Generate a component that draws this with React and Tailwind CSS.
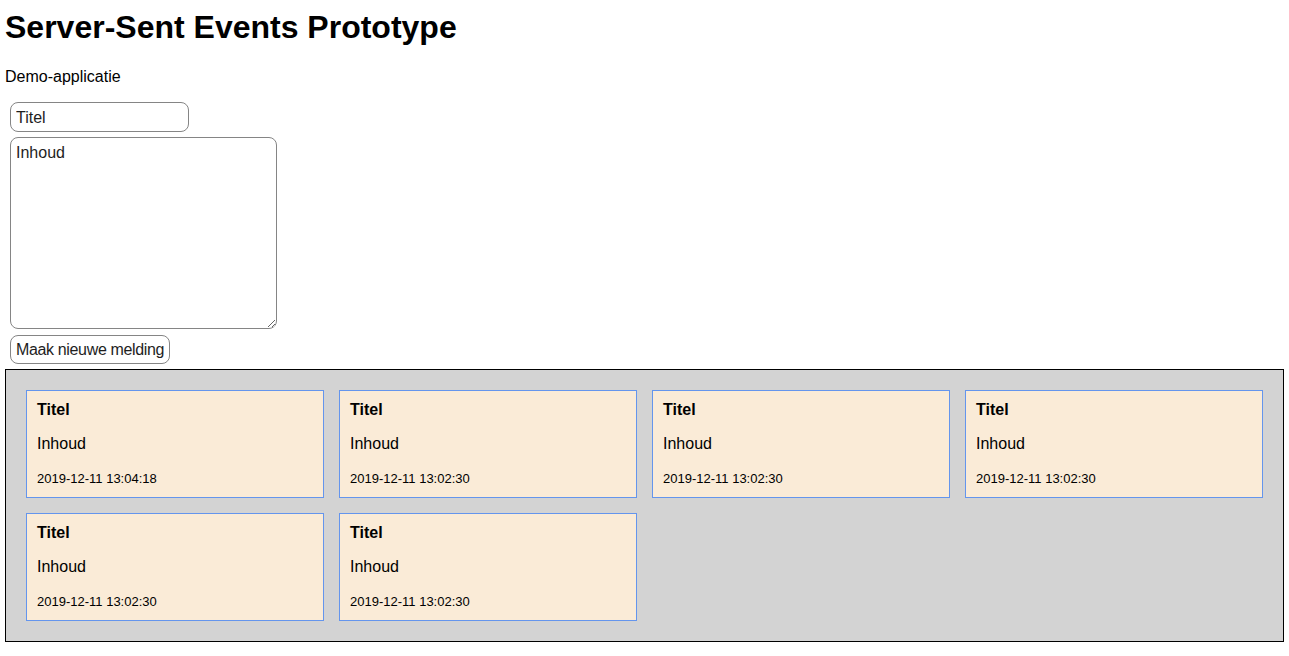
import React from 'react'

const meldingen = [
  { titel: 'Titel', inhoud: 'Inhoud', tijd: '2019-12-11 13:04:18' },
  { titel: 'Titel', inhoud: 'Inhoud', tijd: '2019-12-11 13:02:30' },
  { titel: 'Titel', inhoud: 'Inhoud', tijd: '2019-12-11 13:02:30' },
  { titel: 'Titel', inhoud: 'Inhoud', tijd: '2019-12-11 13:02:30' },
  { titel: 'Titel', inhoud: 'Inhoud', tijd: '2019-12-11 13:02:30' },
  { titel: 'Titel', inhoud: 'Inhoud', tijd: '2019-12-11 13:02:30' }
]

export default function App() {
  return (
    <div className="min-h-screen bg-white px-[5px] pt-[9px] text-black font-['Liberation_Sans',Arial,sans-serif]">
      {/* Header */}
      <h1 className="text-[32px] leading-[37px] font-bold">Server-Sent Events Prototype</h1>
      <p className="mt-[22px] text-[16px] leading-[18px]">Demo-applicatie</p>

      {/* Form */}
      <div className="ml-[5px] mt-[16px] flex flex-col items-start">
        <input
          type="text"
          placeholder="Titel"
          className="w-[179px] h-[30px] px-[5px] pt-[1px] text-[16px] border border-[#858585] rounded-[8px] bg-white outline-none placeholder:text-[#1e1e1e]"
        />
        <textarea
          placeholder="Inhoud"
          className="mt-[5px] w-[267px] h-[192px] px-[5px] pt-[6px] pb-[4px] text-[16px] leading-[18px] border border-[#858585] rounded-[8px] bg-white outline-none placeholder:text-[#1e1e1e]"
        />
        <button className="mt-[6px] w-[160px] h-[29px] pl-[5px] pr-0 text-left whitespace-nowrap overflow-hidden tracking-[-0.35px] text-[16px] text-[#1e1e1e] border border-[#858585] rounded-[8px] bg-white">
          Maak nieuwe melding
        </button>
      </div>

      {/* Meldingen */}
      <div className="mt-[5px] border border-black bg-[#d3d3d3] p-[20px] grid grid-cols-4 gap-[15px]">
        {meldingen.map((m, i) => (
          <div key={i} className="h-[108px] border border-[#6495ed] bg-[#faebd7] px-[10px] pt-[10px]">
            <div className="text-[16px] leading-[18px] font-bold">{m.titel}</div>
            <div className="mt-[16px] text-[16px] leading-[18px]">{m.inhoud}</div>
            <div className="mt-[18px] text-[13px] leading-[15px]">{m.tijd}</div>
          </div>
        ))}
      </div>
    </div>
  )
}
